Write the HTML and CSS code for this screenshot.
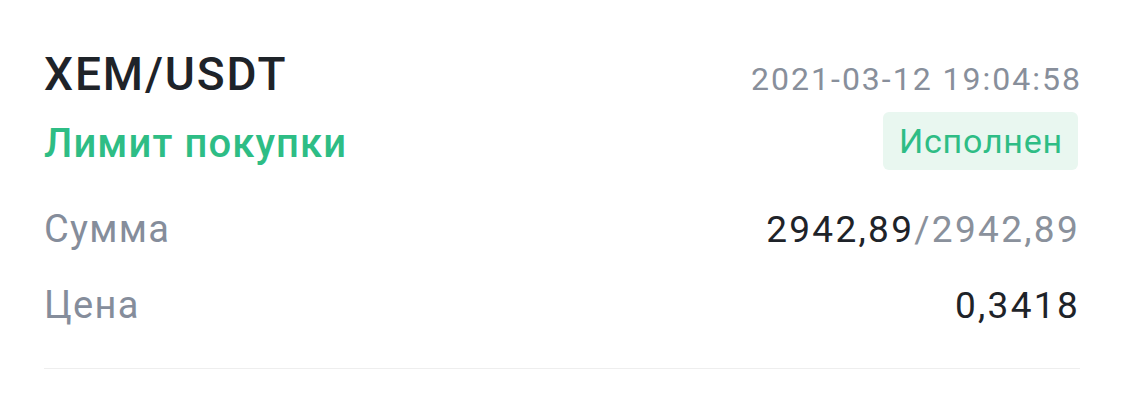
FILE: index.html
```html
<!DOCTYPE html>
<html lang="ru">
<head>
<meta charset="utf-8">
<link rel="stylesheet" href="styles.css">
</head>
<body>
<div class="order">
  <div class="row head">
    <div class="pair">XEM/USDT</div>
    <div class="date">2021-03-12 19:04:58</div>
  </div>
  <div class="row status">
    <div class="side">Лимит покупки</div>
    <div class="badge">Исполнен</div>
  </div>
  <div class="row info">
    <div class="label">Сумма</div>
    <div class="value"><span class="filled">2942,89</span><span class="total">/2942,89</span></div>
  </div>
  <div class="row info">
    <div class="label">Цена</div>
    <div class="value"><span class="filled">0,3418</span></div>
  </div>
  <div class="divider"></div>
</div>
</body>
</html>
```

FILE: styles.css
```css
html, body {
  margin: 0;
  padding: 0;
  background: #ffffff;
}
body {
  font-family: Roboto, "Liberation Sans", sans-serif;
}
.order {
  padding: 47px 44px 0 44px;
}
.row {
  display: flex;
  justify-content: space-between;
}
.head {
  align-items: baseline;
}
.pair {
  font-size: 46px;
  line-height: 54px;
  font-weight: 500;
  color: #1e2329;
  letter-spacing: 1.9px;
}
.date {
  font-size: 32px;
  color: #888f9b;
  letter-spacing: 2px;
  margin-right: -2px;
}
.status {
  align-items: center;
  margin-top: 11px;
  height: 58px;
}
.side {
  font-size: 40px;
  font-weight: 500;
  color: #2ebd85;
  letter-spacing: 1.1px;
  padding-top: 4px;
}
.badge {
  height: 58px;
  box-sizing: border-box;
  padding: 0 15px 0 16px;
  margin-right: 2px;
  display: flex;
  align-items: center;
  background: #e9f7f0;
  border-radius: 6px;
  font-size: 34px;
  letter-spacing: 0.8px;
  color: #2ebd85;
}
.info {
  align-items: baseline;
  height: 76px;
  line-height: 76px;
}
.status + .info {
  margin-top: 21px;
}
.label {
  font-size: 38px;
  color: #858d9b;
  letter-spacing: 1.3px;
}
.value {
  font-size: 37px;
  letter-spacing: 2.3px;
}
.filled {
  color: #1e2329;
}
.total {
  color: #8a919c;
}
.divider {
  margin-top: 25px;
  height: 1px;
  background: #eeeeee;
}
```
